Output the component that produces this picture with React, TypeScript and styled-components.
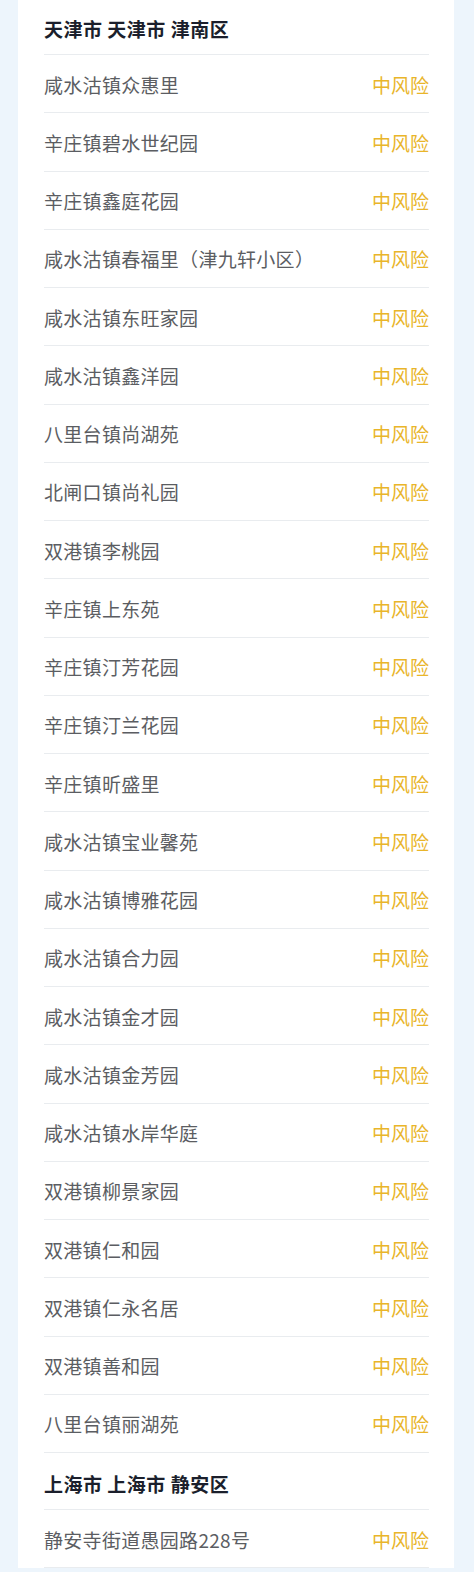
import React from "react";
import styled, { createGlobalStyle } from "styled-components";

const groups = [
  {
    area: "天津市 天津市 津南区",
    places: [
      "咸水沽镇众惠里",
      "辛庄镇碧水世纪园",
      "辛庄镇鑫庭花园",
      "咸水沽镇春福里（津九轩小区）",
      "咸水沽镇东旺家园",
      "咸水沽镇鑫洋园",
      "八里台镇尚湖苑",
      "北闸口镇尚礼园",
      "双港镇李桃园",
      "辛庄镇上东苑",
      "辛庄镇汀芳花园",
      "辛庄镇汀兰花园",
      "辛庄镇昕盛里",
      "咸水沽镇宝业馨苑",
      "咸水沽镇博雅花园",
      "咸水沽镇合力园",
      "咸水沽镇金才园",
      "咸水沽镇金芳园",
      "咸水沽镇水岸华庭",
      "双港镇柳景家园",
      "双港镇仁和园",
      "双港镇仁永名居",
      "双港镇善和园",
      "八里台镇丽湖苑",
    ],
  },
  {
    area: "上海市 上海市 静安区",
    places: ["静安寺街道愚园路228号"],
  },
];

const GlobalStyle = createGlobalStyle`
  html, body {
    margin: 0;
    padding: 0;
    background: #edf5fc;
  }
  body {
    font-family: "Noto Sans CJK SC", "Noto Sans", sans-serif;
  }
`;

const Page = styled.div`
  padding: 0 20px 0 18px;
`;

const Card = styled.div`
  background: #ffffff;
  padding: 0 25px 0 26px;
`;

const AreaTitle = styled.div<{ $first?: boolean }>`
  height: ${(p) => (p.$first ? "55px" : "57px")};
  box-sizing: border-box;
  padding-top: ${(p) => (p.$first ? "19px" : "21px")};
  border-bottom: 1px solid #e9ecef;
  font-size: 19px;
  line-height: 20px;
  font-weight: 700;
  letter-spacing: 0.5px;
  color: #1b1f2c;
`;

const Row = styled.div`
  height: 58.25px;
  box-sizing: border-box;
  display: flex;
  align-items: center;
  justify-content: space-between;
  padding-top: 2px;
  border-bottom: 1px solid #e9ecef;
  font-size: 19px;
  line-height: 20px;
`;

const Place = styled.span`
  color: #5b5d62;
  letter-spacing: 0.3px;
`;

const Risk = styled.span`
  color: #e9b52a;
`;

export default function App() {
  return (
    <>
      <GlobalStyle />
      <Page>
        <Card>
          {groups.map((g, gi) => (
            <React.Fragment key={g.area}>
              <AreaTitle $first={gi === 0}>{g.area}</AreaTitle>
              {g.places.map((p) => (
                <Row key={p}>
                  <Place>{p}</Place>
                  <Risk>中风险</Risk>
                </Row>
              ))}
            </React.Fragment>
          ))}
        </Card>
      </Page>
    </>
  );
}
